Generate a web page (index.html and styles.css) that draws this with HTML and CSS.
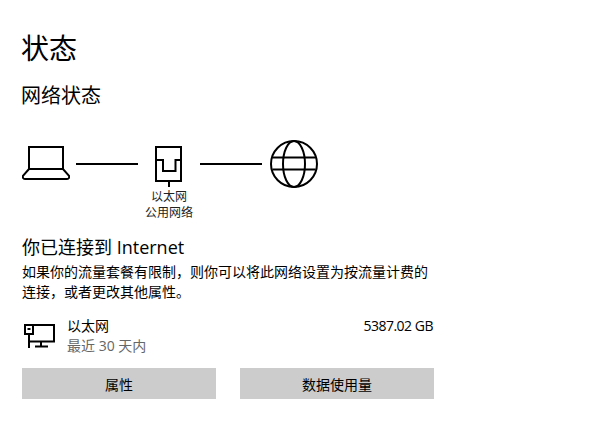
FILE: index.html
```html
<!DOCTYPE html>
<html lang="zh-CN">
<head>
  <meta charset="UTF-8">
  <meta name="viewport" content="width=device-width, initial-scale=1.0">
  <title>状态</title>
  <link rel="stylesheet" href="styles.css">
</head>
<body>

  <main class="page">
    <h1>状态</h1>
    <h2>网络状态</h2>

    <div class="diagram">
      <svg class="icon" width="48" height="48" viewBox="0 0 48 48">
        <path class="stroke" d="M7 29V7H41V29M7 29L1.200 35.500C0.200 37 1 39 3 39H45C47 39 47.800 37 46.800 35.500L41 29Z"/>
      </svg>
      <div class="link first"></div>
      <div class="node">
        <svg class="icon node-icon" width="48" height="48" viewBox="0 0 48 48">
          <rect class="stroke" x="11" y="7" width="25" height="34"/>
          <path class="stroke" d="M11 20H18V31H30.500V20H36M24 41V47"/>
        </svg>
        <div class="node-label">以太网</div>
        <div class="node-label">公用网络</div>
      </div>
      <div class="link"></div>
      <svg class="icon globe" width="48" height="48" viewBox="0 0 48 48">
        <circle class="stroke" cx="24" cy="24" r="23"/>
        <ellipse class="stroke" cx="24" cy="24" rx="11" ry="23"/>
        <path class="stroke" d="M2.500 17.500H45.500M2.500 29.500H45.500"/>
      </svg>
    </div>

    <h3>你已连接到 Internet</h3>
    <p class="note">如果你的流量套餐有限制，则你可以将此网络设置为按流量计费的连接，或者更改其他属性。</p>

    <div class="usage">
      <svg class="icon usage-icon" width="34" height="26" viewBox="0 0 34 26">
        <path class="stroke" d="M11 2H32V18.500H7M19 18.500V23.500M13 23.500H26"/>
        <rect class="stroke" x="3" y="2" width="8" height="9"/>
        <path class="stroke" d="M5.500 6H8.500M7 11V25"/>
      </svg>
      <div class="usage-text">
        <div>以太网</div>
        <div class="muted">最近 30 天内</div>
      </div>
      <div class="amount">5387.02 GB</div>
    </div>

    <div class="actions">
      <button>属性</button>
      <button>数据使用量</button>
    </div>
  </main>

</body>
</html>
```

FILE: styles.css
```css
body {
  margin: 0;
  background-color: #fff;
  color: #000;
  font-family: "Open Sans", "Noto Sans CJK SC", sans-serif;
}
.page {
  width: 412px;
  padding: 28px 0 0 22px;
}
h1 {
  margin: 0 0 0 -1px;
  font-size: 28px;
  font-weight: 400;
  line-height: 40px;
}
h2 {
  margin: 14px 0 0 -1px;
  font-size: 20px;
  font-weight: 400;
  line-height: 28px;
}
h3 {
  margin: 12px 0 0;
  font-size: 18px;
  font-weight: 400;
  line-height: 28px;
}
.diagram {
  display: flex;
  align-items: flex-start;
  margin-top: 30px;
}
.icon {
  display: block;
  flex: none;
}
.stroke {
  fill: none;
  stroke: #000;
  stroke-width: 2;
}
.link {
  width: 62px;
  height: 2px;
  margin-top: 23px;
  background-color: #000;
}
.link.first {
  margin-left: 6px;
}
.globe {
  margin-left: 8px;
}
.node {
  width: 62px;
  display: flex;
  flex-direction: column;
  align-items: center;
}
.node-icon {
  margin-bottom: 1px;
}
.node-label {
  font-size: 12px;
  line-height: 16px;
  color: #222;
}
.note {
  margin: 1px 0 0;
  font-size: 14px;
  line-height: 20px;
}
.usage {
  display: flex;
  margin-top: 14px;
  font-size: 14px;
  line-height: 20px;
}
.usage-icon {
  margin-top: 7px;
}
.usage-text {
  flex: 1;
  margin-left: 11px;
}
.muted {
  color: #666;
}
.amount {
  margin-right: 1px;
  letter-spacing: -0.5px;
}
.actions {
  display: flex;
  gap: 24px;
  margin-top: 12px;
}
button {
  width: 194px;
  height: 31px;
  padding: 0;
  border: none;
  background-color: #ccc;
  color: #000;
  font-family: inherit;
  font-size: 14px;
}
```
